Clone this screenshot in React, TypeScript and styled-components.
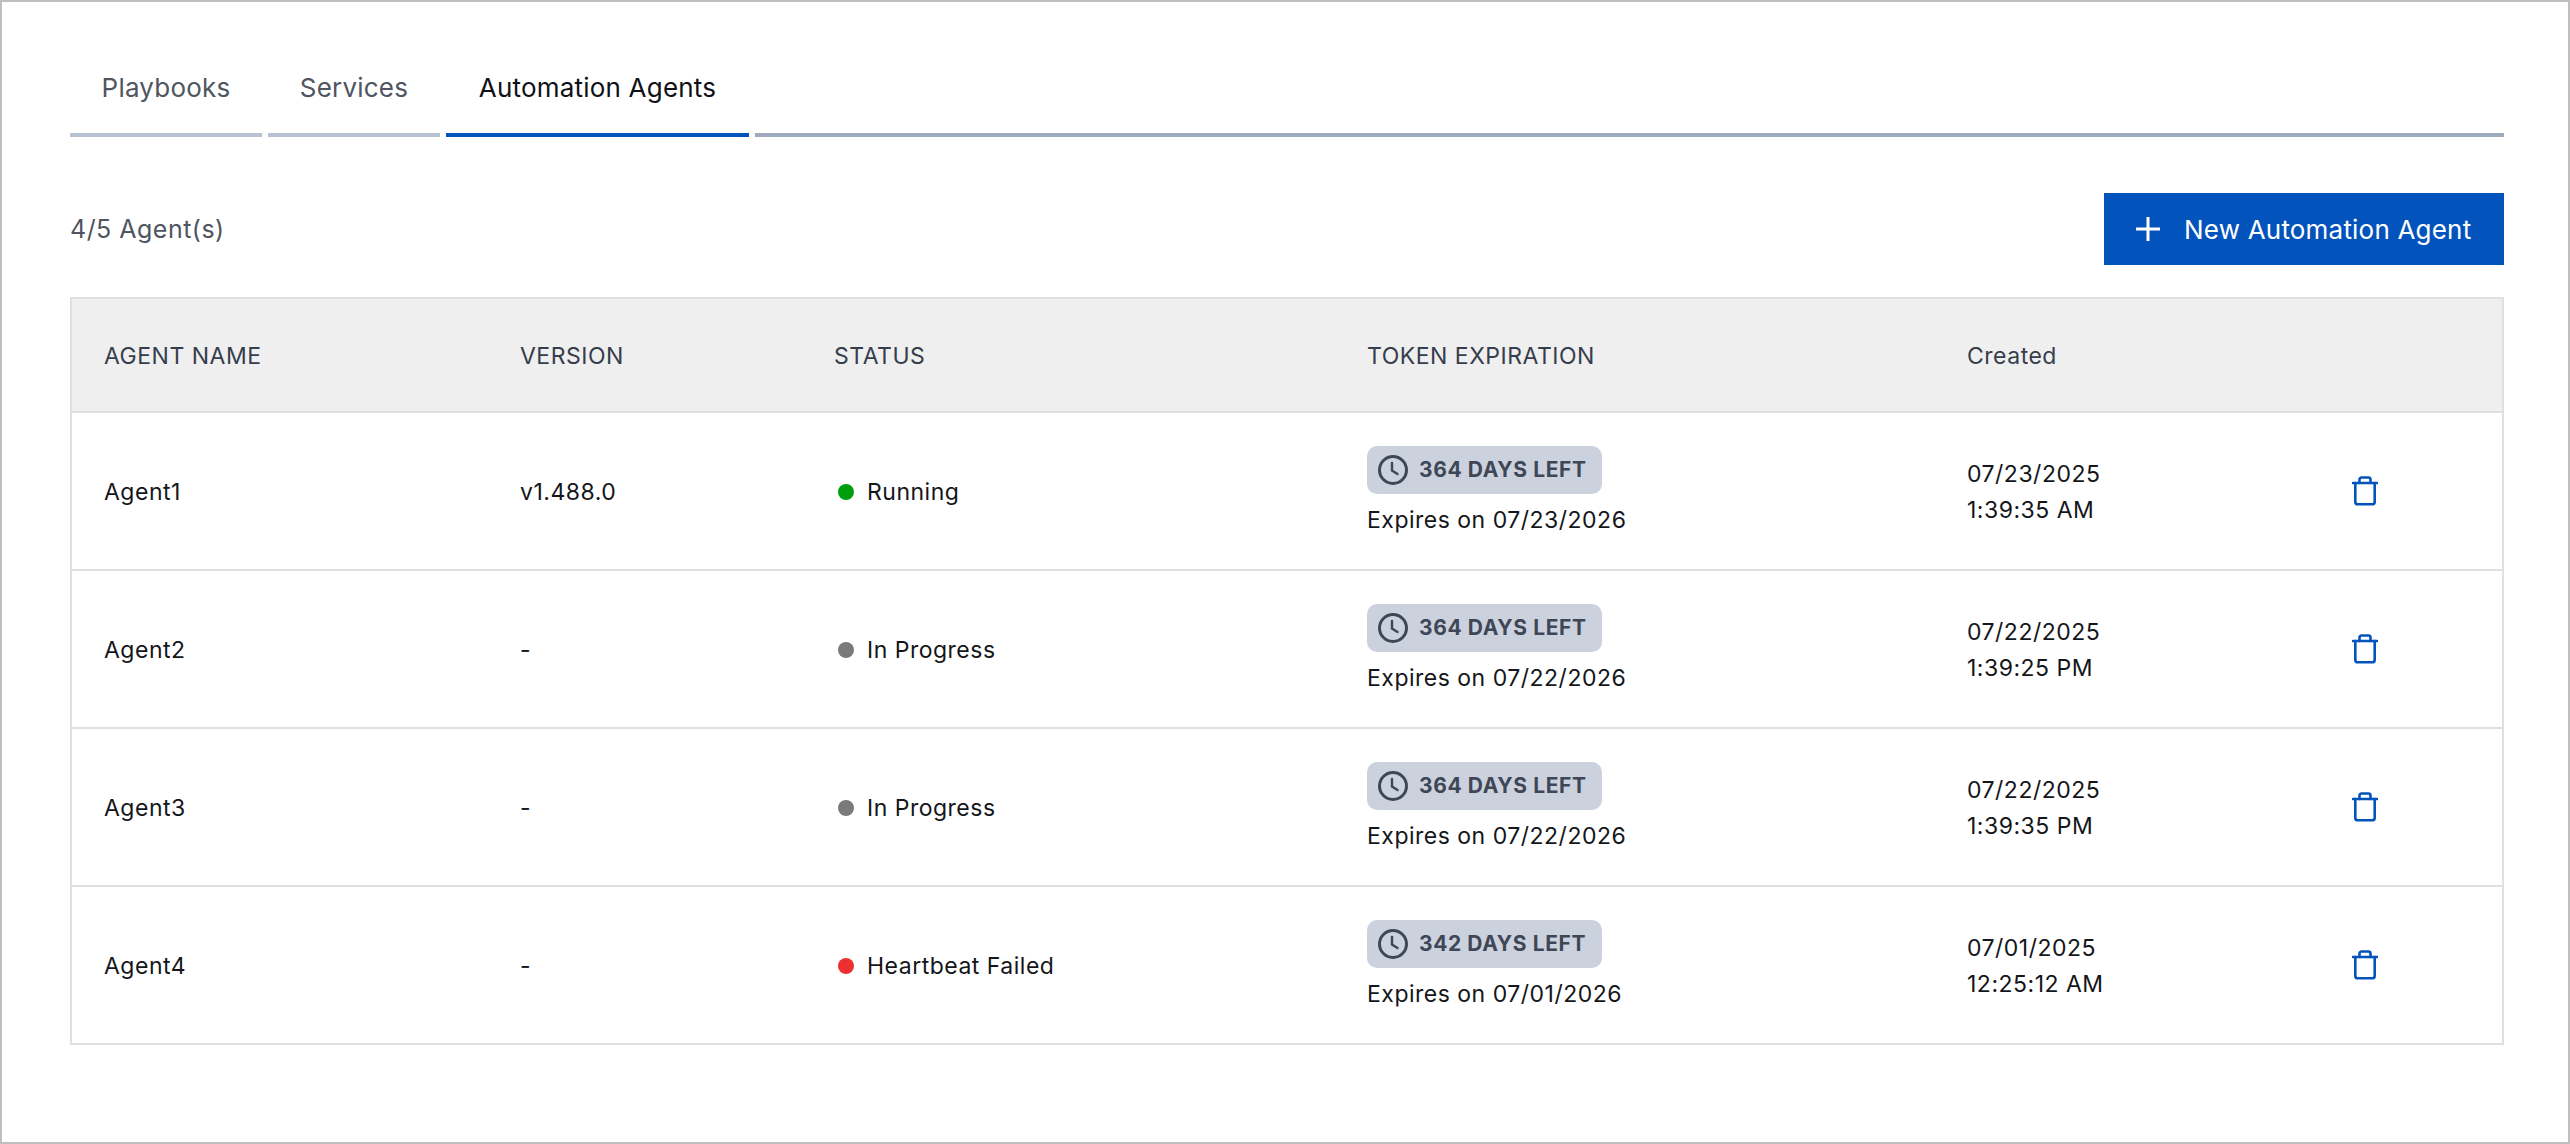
import React from "react";
import styled, { createGlobalStyle } from "styled-components";

const Global = createGlobalStyle`
  html, body { margin: 0; padding: 0; background: #fff; }
  * { box-sizing: border-box; }
  body { font-family: Inter, "Liberation Sans", sans-serif; color: #14161a; }
`;

const Frame = styled.div`
  width: 2570px;
  height: 1144px;
  border: 2px solid #bfbfbf;
  padding: 41px 64px 0 68px;
  background: #fff;
`;

const TabBar = styled.div`
  display: flex;
  gap: 6px;
  height: 94px;
`;

const Tab = styled.div<{ $active?: boolean; $width: number }>`
  display: flex;
  align-items: center;
  justify-content: center;
  width: ${(p) => p.$width}px;
  padding-bottom: 2px;
  font-size: 26px;
  letter-spacing: 0.2px;
  color: ${(p) => (p.$active ? "#0f1117" : "#50555f")};
  border-bottom: 4px solid ${(p) => (p.$active ? "#0353bd" : "#b8c2d2")};
`;

const TabFiller = styled.div`
  flex: 1;
  border-bottom: 4px solid #a0aabf;
`;

const Toolbar = styled.div`
  display: flex;
  align-items: center;
  justify-content: space-between;
  margin-top: 56px;
  height: 72px;
`;

const Count = styled.div`
  font-size: 25px;
  letter-spacing: 0.48px;
  color: #50555f;
`;

const PrimaryButton = styled.button`
  display: flex;
  align-items: center;
  gap: 24px;
  width: 400px;
  height: 72px;
  padding: 0 0 0 32px;
  border: 0;
  background: #0353bd;
  color: #fff;
  font-family: inherit;
  font-size: 26px;
  letter-spacing: 0.2px;
`;

const Table = styled.table`
  width: 2434px;
  margin-top: 32px;
  table-layout: fixed;
  border-collapse: collapse;
  border: 2px solid #e0e0e0;
`;

const HeadCell = styled.th`
  height: 114px;
  padding: 1px 0 0 32px;
  background: #efefef;
  border-bottom: 2px solid #e0e0e0;
  font-size: 23px;
  letter-spacing: 0.5px;
  font-weight: 400;
  text-align: left;
  color: #363d4c;
`;

const Row = styled.tr`
  height: 158px;
  border-bottom: 2px solid #e0e0e0;
`;

const Cell = styled.td`
  padding: 2px 0 0 32px;
  font-size: 23px;
  letter-spacing: 0.5px;
  line-height: 36px;
  color: #14161a;
  vertical-align: middle;
`;

const StatusWrap = styled.div`
  display: flex;
  align-items: center;
  gap: 13px;
  padding-left: 4px;
`;

const Dot = styled.span<{ $color: string }>`
  width: 16px;
  height: 16px;
  border-radius: 50%;
  background: ${(p) => p.$color};
`;

const Badge = styled.div`
  display: flex;
  align-items: center;
  gap: 11px;
  width: 235px;
  height: 48px;
  padding-left: 11px;
  border-radius: 10px;
  background: #cbd2de;
  color: #3f4757;
  font-size: 21px;
  letter-spacing: 0.6px;
  font-weight: 700;
`;

const Expiry = styled.div`
  margin-top: 8px;
`;

const TrashButton = styled.button`
  display: block;
  margin: -2px 0 0 22px;
  padding: 0;
  border: 0;
  background: none;
  line-height: 0;
`;

const ClockIcon = () => (
  <svg width="30" height="30" viewBox="0 0 30 30" fill="none" stroke="#3f4757" strokeWidth="3" strokeLinecap="round">
    <circle cx="15" cy="15" r="13.5" />
    <path d="M14 8v7.5l5.5 3.5" strokeWidth="2.4" />
  </svg>
);

const PlusIcon = () => (
  <svg width="24" height="24" viewBox="0 0 24 24" fill="none" stroke="#fff" strokeWidth="3">
    <path d="M12 0v24M0 12h24" />
  </svg>
);

const TrashIcon = () => (
  <svg width="26" height="30" viewBox="0 0 26 30" fill="none" stroke="#0353bd" strokeWidth="2.6" strokeLinecap="round" strokeLinejoin="round">
    <path d="M1 7h24" />
    <path d="M7.5 7V3.6c0-1.2.9-2.1 2.1-2.1h6.8c1.2 0 2.1.9 2.1 2.1V7" />
    <path d="M3.3 7v18.7c0 1.6 1 2.6 2.6 2.6h14.2c1.6 0 2.6-1 2.6-2.6V7" />
  </svg>
);

const GREEN = "#009e0f";
const GRAY = "#7a7a7a";
const RED = "#ec3030";

const agents = [
  { name: "Agent1", version: "v1.488.0", status: "Running", color: GREEN, left: "364 DAYS LEFT", expires: "07/23/2026", date: "07/23/2025", time: "1:39:35 AM" },
  { name: "Agent2", version: "-", status: "In Progress", color: GRAY, left: "364 DAYS LEFT", expires: "07/22/2026", date: "07/22/2025", time: "1:39:25 PM" },
  { name: "Agent3", version: "-", status: "In Progress", color: GRAY, left: "364 DAYS LEFT", expires: "07/22/2026", date: "07/22/2025", time: "1:39:35 PM" },
  { name: "Agent4", version: "-", status: "Heartbeat Failed", color: RED, left: "342 DAYS LEFT", expires: "07/01/2026", date: "07/01/2025", time: "12:25:12 AM" },
];

export default function App() {
  return (
    <>
      <Global />
      <Frame>
        <TabBar>
          <Tab $width={192}>Playbooks</Tab>
          <Tab $width={172}>Services</Tab>
          <Tab $width={303} $active>Automation Agents</Tab>
          <TabFiller />
        </TabBar>
        <Toolbar>
          <Count>4/5 Agent(s)</Count>
          <PrimaryButton><PlusIcon />New Automation Agent</PrimaryButton>
        </Toolbar>
        <Table>
          <colgroup>
            <col style={{ width: 417 }} />
            <col style={{ width: 314 }} />
            <col style={{ width: 533 }} />
            <col style={{ width: 600 }} />
            <col style={{ width: 363 }} />
            <col />
          </colgroup>
          <thead>
            <tr>
              <HeadCell>AGENT NAME</HeadCell>
              <HeadCell>VERSION</HeadCell>
              <HeadCell>STATUS</HeadCell>
              <HeadCell>TOKEN EXPIRATION</HeadCell>
              <HeadCell>Created</HeadCell>
              <HeadCell />
            </tr>
          </thead>
          <tbody>
            {agents.map((a) => (
              <Row key={a.name}>
                <Cell>{a.name}</Cell>
                <Cell>{a.version}</Cell>
                <Cell>
                  <StatusWrap><Dot $color={a.color} />{a.status}</StatusWrap>
                </Cell>
                <Cell>
                  <Badge><ClockIcon />{a.left}</Badge>
                  <Expiry>Expires on {a.expires}</Expiry>
                </Cell>
                <Cell>{a.date}<br />{a.time}</Cell>
                <Cell><TrashButton><TrashIcon /></TrashButton></Cell>
              </Row>
            ))}
          </tbody>
        </Table>
      </Frame>
    </>
  );
}
